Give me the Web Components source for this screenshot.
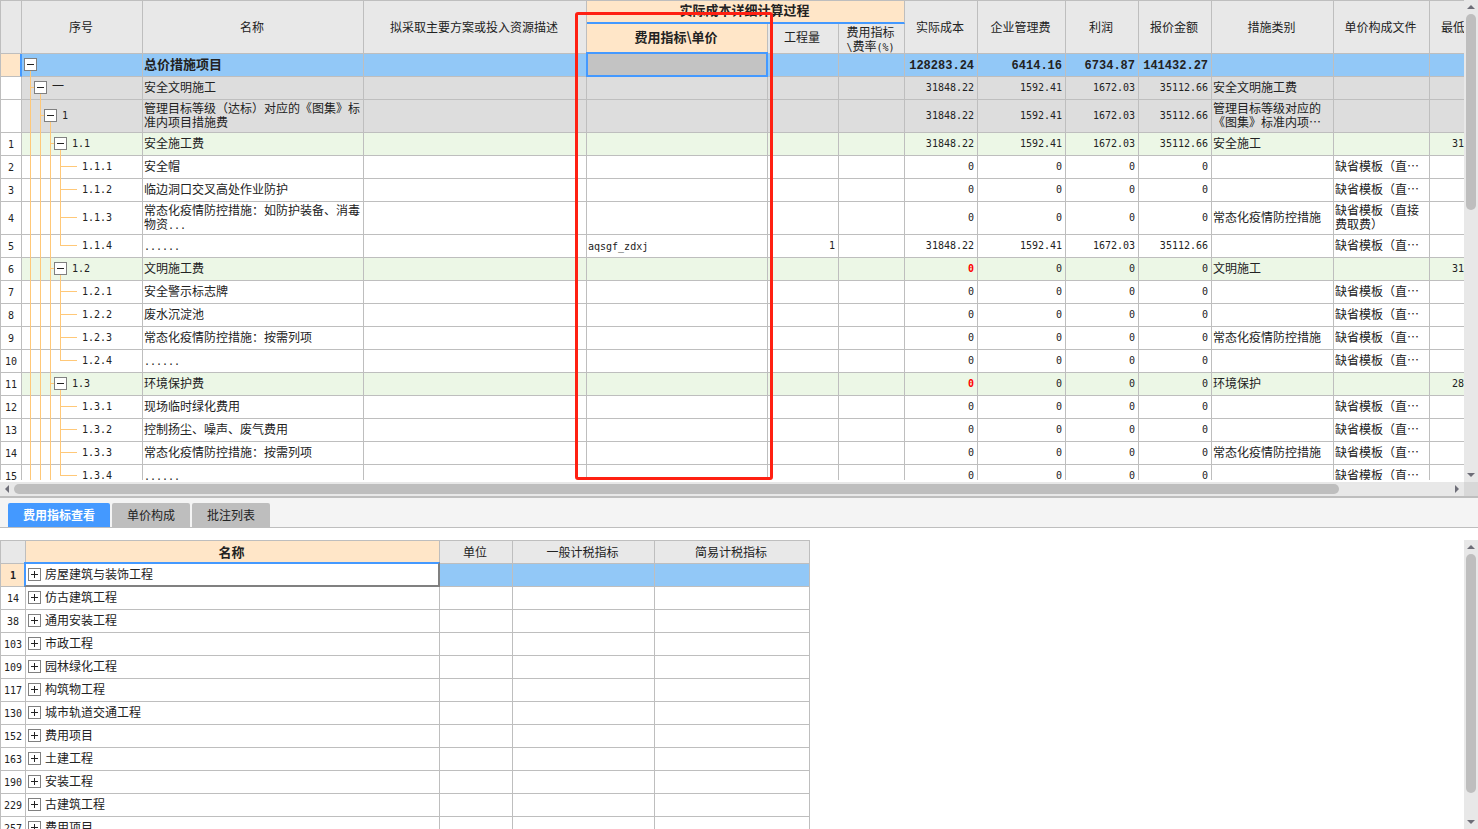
<!DOCTYPE html>
<html lang="zh-CN">
<head>
<meta charset="utf-8">
<title>措施项目</title>
<style>
html,body{height:100%;margin:0}
body{font:12px/14px "Noto Sans CJK SC",sans-serif;color:#222;background:#fff;overflow:hidden;text-spacing-trim:space-all}
</style>
</head>
<body>
<cost-app></cost-app>
<script>
const GRID_CSS = `
:host{display:block;min-width:0;min-height:0;overflow:hidden;
  --line:#bebebe;--head:#e8e8e8;--pick:#ffe6c8;--blue:#4499ff;--sel:#92c8f7}
table{table-layout:fixed;border-collapse:separate;border-spacing:0;
  border:solid var(--line);border-width:1px 0 0 1px;width:0}
th,td{box-sizing:border-box;height:23px;padding:0 1px 2px;border:solid var(--line);border-width:0 1px 1px 0;
  font-weight:400;text-align:left;vertical-align:middle}
thead th{background:var(--head);text-align:center;padding:0 2px 0 0}
thead th.pick{background:var(--pick);font-weight:700;font-size:13px}
tbody th{text-align:center;padding:0 0 2px;background:#fff}
i{font:10px/0 "DejaVu Sans Mono",monospace}
.num{text-align:right;padding:0 3px 4px 0}
button{box-sizing:border-box;width:13px;height:13px;padding:0;border:1px solid #808080;background:#fff;display:block;flex:none}
button svg{display:block}
`;
// Half-width runs use the narrow monospace face.
const mix = s => s.replace(/[\x21-\x7e]+/g, m => `<i>${m}</i>`);
const toggle = open => `<button type="button" aria-expanded="${open}"><svg width="11" height="11" shape-rendering="crispEdges" stroke="#222"><path d="M2 5.5h7${open ? '' : 'M5.5 2v7'}"/></svg></button>`;

class ScrollBar extends HTMLElement {
  constructor() {
    super();
    const v = this.hasAttribute('vertical');
    const [a, b] = v ? ['M3 9l4-4 4 4z', 'M3 5l4 4 4-4z'] : ['M9 3l-4 4 4 4z', 'M5 3l4 4-4 4z'];
    const arrow = d => `<svg width="14" height="14"><path fill="#6e6e78" d="${d}"/></svg>`;
    this.attachShadow({mode: 'open'}).innerHTML = `<style>
      :host{display:flex;flex-direction:${v ? 'column' : 'row'};background:#e8e8e8}
      svg{display:block;flex:none}
      .thumb{flex:${this.getAttribute('thumb')} 1 0;background:#bebebe;border-radius:5px;margin:${v ? '0 2px' : '2px 0'}}
      .rest{flex:${this.getAttribute('rest')} 1 0}
    </style>${arrow(a)}<div class="thumb"></div><div class="rest"></div>${arrow(b)}`;
  }
}

const PEND = '缺省模板（直…';
const EPI = '常态化疫情防控措施';
const V = ['31848.22', '1592.41', '1672.03', '35112.66'];
const Z = ['0', '0', '0', '0'];
const row = (kind, level, code, name, vals, type = '', file = '', more = {}) => ({kind, level, code, name, vals, type, file, ...more});
const COST_ROWS = [
  row('sel', 0, '', '总价措施项目', ['128283.24', '6414.16', '6734.87', '141432.27']),
  row('grey', 1, '一', '安全文明施工', V, '安全文明施工费'),
  row('grey', 2, '1', '管理目标等级（达标）对应的《图集》标准内项目措施费', V, '管理目标等级对应的《图集》标准内项…', '', {tall: 1}),
  row('green', 3, '1.1', '安全施工费', V, '安全施工', '', {low: '31'}),
  row('', 4, '1.1.1', '安全帽', Z, '', PEND),
  row('', 4, '1.1.2', '临边洞口交叉高处作业防护', Z, '', PEND),
  row('', 4, '1.1.3', '常态化疫情防控措施：如防护装备、消毒物资...', Z, EPI, '缺省模板（直接费取费）', {tall: 1}),
  row('', 4, '1.1.4', '......', V, '', PEND, {last: 1, unit: 'aqsgf_zdxj', qty: '1'}),
  row('green', 3, '1.2', '文明施工费', Z, '文明施工', '', {low: '31', warn: 1}),
  row('', 4, '1.2.1', '安全警示标志牌', Z, '', PEND),
  row('', 4, '1.2.2', '废水沉淀池', Z, '', PEND),
  row('', 4, '1.2.3', '常态化疫情防控措施：按需列项', Z, EPI, PEND),
  row('', 4, '1.2.4', '......', Z, '', PEND, {last: 1}),
  row('green', 3, '1.3', '环境保护费', Z, '环境保护', '', {low: '28', warn: 1}),
  row('', 4, '1.3.1', '现场临时绿化费用', Z, '', PEND),
  row('', 4, '1.3.2', '控制扬尘、噪声、废气费用', Z, '', PEND),
  row('', 4, '1.3.3', '常态化疫情防控措施：按需列项', Z, EPI, PEND),
  row('', 4, '1.3.4', '......', Z, '', PEND, {last: 1}),
];

class CostGrid extends HTMLElement {
  constructor() {
    super();
    const cols = [21, 121, 221, 223, 181, 71, 66, 73, 88, 73, 73, 122, 96, 73];
    this.attachShadow({mode: 'open'}).innerHTML = `<style>${GRID_CSS}
      thead tr:first-child th{height:23px}
      thead tr:last-child th{height:30px}
      thead tr:last-child th:not(.rate),thead th.group{padding-bottom:3px}
      th.group{border-bottom:2px solid var(--blue)}
      .tall td,.tall th{height:33px}
      .sel td{background:var(--sel);font-weight:700;font-size:13px}
      .sel i{font:bold 12px/0 "Liberation Mono",monospace}
      .sel .num{padding-bottom:2px}
      .sel th{background:var(--pick);border-right:2px solid var(--blue)}
      .grey td{background:#ddd}
      .green td{background:#ecf7e6}
      td.code{padding:0}
      .tree{display:flex;align-items:center}
      .tree svg.guide{display:block;flex:none;margin-bottom:-1px}
      .tree button{margin:0 5px 1px -13px}
      .tree span{padding-bottom:4px}
      .warn i{color:#f00;font-weight:700}
      td.current{position:relative;background:#c3c3c3}
      td.current::after{content:"";position:absolute;inset:-2px -1px -1px;border:2px solid var(--blue)}
      .low{text-align:left;padding:0 0 4px 22px}
      thead th.lowest{text-align:left;padding-left:11px}
    </style><table><colgroup>${cols.map(w => `<col style="width:${w}px">`).join('')}</colgroup>
    <thead><tr><th rowspan="2"></th><th rowspan="2">序号</th><th rowspan="2">名称</th><th rowspan="2">拟采取主要方案或投入资源描述</th>
    <th colspan="3" class="pick group">实际成本详细计算过程</th>
    ${['实际成本', '企业管理费', '利润', '报价金额', '措施类别', '单价构成文件'].map(t => `<th rowspan="2">${t}</th>`).join('')}<th rowspan="2" class="lowest">最低</th></tr>
    <tr><th class="pick">费用指标\\单价</th><th>工程量</th><th class="rate">费用指标<br>${mix('\\')}费率${mix('(%)')}</th></tr></thead>
    <tbody>${COST_ROWS.map((r, i) => this.row(r, i)).join('')}</tbody></table>`;
  }
  guide(r) {
    const h = r.tall ? 33 : 23, mid = (h - 1) / 2 - 0.5, leaf = r.level === 4;
    let d = '';
    for (let k = 0; k < Math.min(r.level, 3); k++) d += `M${8.5 + 10 * k} 0V${h}`;
    if (leaf) d += `M38.5 0V${r.last ? mid + .5 : h}M38 ${mid}H55`;
    else {
      const x = 8.5 + 10 * r.level;
      d += `M${x} ${mid}V${h}`;
      if (r.level) d += `M${x - 10} ${mid}H${x}`;
    }
    const w = leaf ? 60 : 15 + 10 * r.level;
    return `<svg class="guide" width="${w}" height="${h}" shape-rendering="crispEdges"><path d="${d}" fill="none" stroke="#ffc878"/></svg>${leaf ? '' : toggle(true)}`;
  }
  row(r, i) {
    const td = (cls, t = '') => `<td class="${cls}">${mix(t)}</td>`;
    return `<tr class="${r.kind} ${r.tall ? 'tall' : ''}"><th scope="row">${i > 2 ? mix(String(i - 2)) : ''}</th>
      <td class="code"><div class="tree">${this.guide(r)}<span>${mix(r.code)}</span></div></td>${td('', r.name)}<td></td>${td(i ? '' : 'current', r.unit)}${td('num', r.qty)}<td></td>${
      r.vals.map((v, k) => td('num' + (r.warn && !k ? ' warn' : ''), v)).join('')}${td('', r.type)}${td('', r.file)}${td('low', r.low)}</tr>`;
  }
}

class IndexGrid extends HTMLElement {
  constructor() {
    super();
    const rows = [[1, '房屋建筑与装饰工程'], [14, '仿古建筑工程'], [38, '通用安装工程'], [103, '市政工程'], [109, '园林绿化工程'], [117, '构筑物工程'],
      [130, '城市轨道交通工程'], [152, '费用项目'], [163, '土建工程'], [190, '安装工程'], [229, '古建筑工程'], [257, '费用项目']];
    this.attachShadow({mode: 'open'}).innerHTML = `<style>${GRID_CSS}
      td{padding:0 1px}
      .name{display:flex;align-items:center;gap:4px;padding-left:1px}
      .name button{margin-bottom:1px}
      .name span{padding-bottom:2px}
      .sel th{background:var(--pick)}
      .sel th i{font-weight:700}
      .sel td{background:var(--sel)}
      .sel td.current{position:relative;background:#fff}
      td.current::after{content:"";position:absolute;inset:-2px -1px -1px -2px;pointer-events:none;
        border:solid;border-width:2px;border-color:var(--blue) #808080 #808080 var(--blue)}
    </style><table><colgroup>${[25, 414, 73, 142, 155].map(w => `<col style="width:${w}px">`).join('')}</colgroup>
    <thead><tr><th></th><th class="pick">名称</th><th>单位</th><th>一般计税指标</th><th>简易计税指标</th></tr></thead>
    <tbody>${rows.map(([n, t], i) => `<tr class="${i ? '' : 'sel'}"><th scope="row">${mix(String(n))}</th><td class="${i ? '' : 'current'}"><div class="name">${toggle(false)}<span>${t}</span></div></td><td></td><td></td><td></td></tr>`).join('')}</tbody></table>`;
  }
}

class TabStrip extends HTMLElement {
  constructor() {
    super();
    this.attachShadow({mode: 'open'}).innerHTML = `<style>
      :host{display:flex;align-items:flex-end;gap:2px;box-sizing:border-box;height:30px;padding-left:8px;background:#f4f4f4;border-bottom:1px solid #bebebe}
      button{height:24px;padding:0 15px;border:0;border-radius:2px 2px 0 0;background:#bebebe;color:#222;font:inherit}
      button[aria-selected=true]{background:#4499ff;color:#fff;font-weight:700}
    </style>${['费用指标查看', '单价构成', '批注列表'].map((t, i) => `<button type="button" role="tab" aria-selected="${!i}">${t}</button>`).join('')}`;
  }
}

class CostApp extends HTMLElement {
  constructor() {
    super();
    this.attachShadow({mode: 'open'}).innerHTML = `<style>
      :host{display:flex;flex-direction:column;height:100vh}
      .top{position:relative;flex:496 1 0;min-height:0;display:grid;grid-template:minmax(0,1fr) 2px 14px / minmax(0,1fr) 14px}
      .top scroll-bar[vertical]{grid-area:1/2/3/3}
      .top .across{grid-area:3/1}
      .corner{grid-area:3/2;background:#d8d8d8}
      .split{height:2px;background:#bebebe}
      .bottom{flex:289 1 0;min-height:0;margin-top:12px;display:grid;grid-template:minmax(0,1fr) / minmax(0,1fr) 14px}
      .mark{position:absolute;box-sizing:border-box;left:575px;top:12px;width:198px;bottom:16px;border:3px solid #ff2012;border-radius:3px;pointer-events:none}
    </style>
    <div class="top"><cost-grid></cost-grid><scroll-bar vertical thumb="196" rest="258"></scroll-bar>
      <scroll-bar class="across" thumb="1325" rest="111"></scroll-bar><div class="corner"></div><div class="mark"></div></div>
    <div class="split"></div><tab-strip role="tablist"></tab-strip>
    <div class="bottom"><index-grid></index-grid><scroll-bar vertical thumb="239" rest="22"></scroll-bar></div>`;
  }
}
customElements.define('scroll-bar', ScrollBar);
customElements.define('cost-grid', CostGrid);
customElements.define('index-grid', IndexGrid);
customElements.define('tab-strip', TabStrip);
customElements.define('cost-app', CostApp);
</script>
</body>
</html>
